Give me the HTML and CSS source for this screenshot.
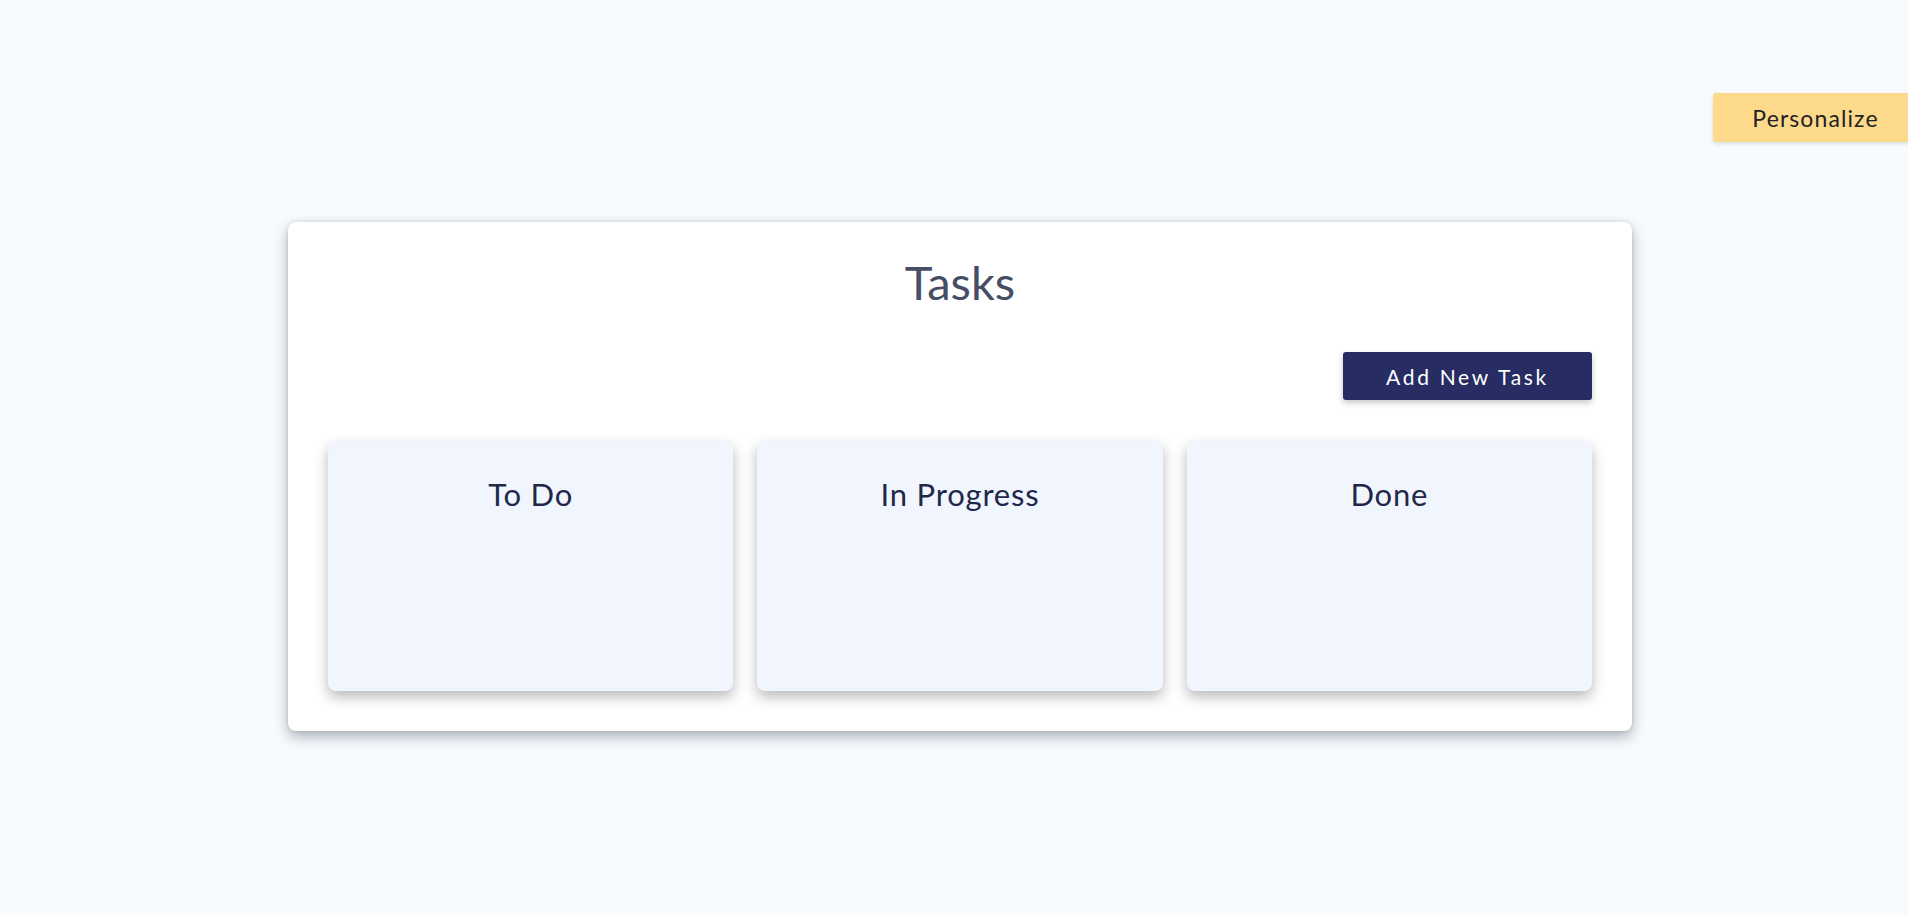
FILE: index.html
```html
<!DOCTYPE html>
<html lang="en">
<head>
<meta charset="utf-8">
<title>Tasks</title>
<link rel="stylesheet" href="styles.css">
</head>
<body>
<button class="personalize">Personalize</button>
<main class="page">
  <section class="board">
    <h1 class="board-title">Tasks</h1>
    <div class="toolbar">
      <button class="add-btn">Add New Task</button>
    </div>
    <div class="columns">
      <div class="column"><h2 class="column-title">To Do</h2></div>
      <div class="column"><h2 class="column-title">In Progress</h2></div>
      <div class="column"><h2 class="column-title">Done</h2></div>
    </div>
  </section>
</main>
</body>
</html>
```
FILE: styles.css
```css
* { box-sizing: border-box; }
html, body {
  margin: 0;
  padding: 0;
  background: #f7fbfe;
  font-family: Lato, "Noto Sans", sans-serif;
}
body {
  min-height: 100vh;
}
.personalize {
  position: absolute;
  top: 93px;
  right: 0;
  width: 195px;
  height: 49px;
  border: none;
  border-radius: 3px 0 0 3px;
  background: #fdd98b;
  color: #222;
  font-family: inherit;
  font-size: 23px;
  letter-spacing: 1.1px;
  box-shadow: 0 2px 4px rgba(0,0,0,0.12);
  padding: 0 0 0 10px;
}
.page {
  padding: 222px 0 120px;
  display: flex;
  justify-content: center;
}
.board {
  margin-left: 288px;
  margin-right: 276px;
  width: 1344px;
  background: #fff;
  border-radius: 8px;
  box-shadow: 0 6px 14px rgba(30,40,60,0.34), 0 0 4px rgba(30,40,60,0.14);
  padding: 30px 40px 40px;
}
.board-title {
  margin: 0;
  text-align: center;
  font-weight: 400;
  font-size: 47px;
  line-height: 60px;
  color: #454e64;
}
.toolbar {
  display: flex;
  justify-content: flex-end;
  margin-top: 40px;
  margin-bottom: 41px;
}
.add-btn {
  width: 249px;
  height: 48px;
  border: none;
  border-radius: 3px;
  background: #272d63;
  color: #fff;
  font-family: inherit;
  font-size: 21px;
  letter-spacing: 2.7px;
  box-shadow: 0 3px 6px rgba(0,0,0,0.22);
  padding-top: 1px;
}
.columns {
  display: grid;
  grid-template-columns: repeat(3, 1fr);
  gap: 24px;
}
.column {
  height: 250px;
  background: #f1f6fe;
  border-radius: 8px;
  box-shadow: 0 6px 14px rgba(0,0,0,0.28);
  padding-top: 33px;
}
.column-title {
  margin: 0;
  text-align: center;
  font-weight: 400;
  font-size: 31px;
  line-height: 40px;
  color: #1f2849;
  letter-spacing: 0.8px;
}
```
